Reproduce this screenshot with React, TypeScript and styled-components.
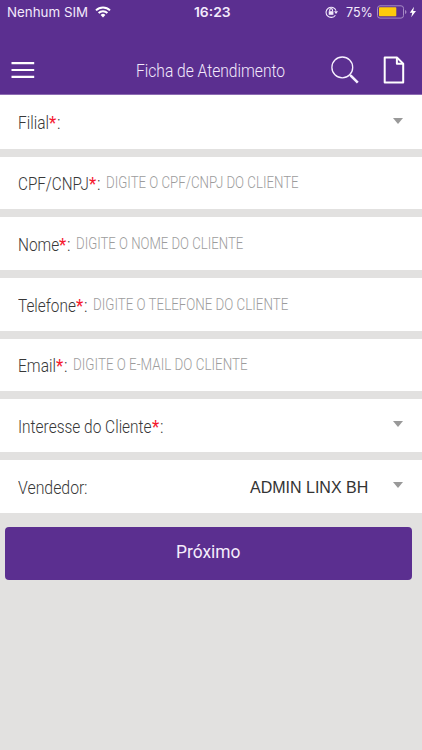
import React, { useLayoutEffect, useRef, useState } from "react";
import styled, { createGlobalStyle } from "styled-components";

const PURPLE = "#5b2f90";

const GlobalStyle = createGlobalStyle`
  * { box-sizing: border-box; }
  body { margin: 0; background: #e2e1e0; font-family: Roboto, "Liberation Sans", sans-serif; }
`;

const Screen = styled.main`
  width: 422px;
  height: 750px;
  overflow: hidden;
  background: #e2e1e0;
`;

const FitBox = styled.span<{ $width: number }>`
  display: block;
  flex: none;
  width: ${(p) => p.$width}px;
  white-space: nowrap;
`;
const FitInner = styled.span`
  display: inline-block;
  transform-origin: 0 50%;
`;

/* Condenses a run of text so that it fills the given width. */
function Fit({ width, children }: { width: number; children: React.ReactNode }) {
  const ref = useRef<HTMLSpanElement>(null);
  const [scale, setScale] = useState(1);
  useLayoutEffect(() => {
    if (ref.current) setScale(width / ref.current.offsetWidth);
  }, [width]);
  return (
    <FitBox $width={width}>
      <FitInner ref={ref} style={{ transform: `scaleX(${scale})` }}>{children}</FitInner>
    </FitBox>
  );
}

const Header = styled.header`
  height: 95px;
  background: ${PURPLE};
  border-bottom: 1px solid #8d6cb2;
  color: #f3eafc;
`;
const StatusBar = styled.div`
  height: 24px;
  display: grid;
  grid-template-columns: 1fr auto 1fr;
  align-items: center;
  padding: 0 5px 0 7px;
  font: 400 13px/24px Inter, sans-serif;
`;
const StatusGroup = styled.div<{ $end?: boolean }>`
  display: flex;
  align-items: center;
  justify-content: ${(p) => (p.$end ? "flex-end" : "flex-start")};
`;
const Clock = styled.div`
  font-weight: 600;
  font-size: 13.5px;
`;
const Icon = styled.svg<{ $left?: number }>`
  display: block;
  flex: none;
  margin-left: ${(p) => p.$left ?? 0}px;
`;
const NavBar = styled.nav`
  height: 70px;
  display: flex;
  align-items: center;
  padding: 22px 17px 0 11px;
`;
const Title = styled.h1`
  flex: 1;
  margin: 2px 0 0 101px;
  font-size: 18px;
  line-height: 24px;
  font-weight: 300;
`;

const Form = styled.form`
  display: grid;
  grid-template-rows: 54px 52px 53px 53px 52px 53px 53px;
  row-gap: 8px;
`;
const Row = styled.div`
  display: flex;
  align-items: center;
  padding: 2px 19px 0 18px;
  background: #fff;
  font-size: 18px;
  line-height: 24px;
  font-weight: 300;
  color: #383838;
`;
const Star = styled.span`
  color: #f5192f;
  font-weight: 400;
`;
const Placeholder = styled.span`
  margin-left: 6px;
  font-size: 16px;
  line-height: 20px;
  padding-bottom: 2px;
  color: #9c9c9c;
`;
const Value = styled.span`
  margin-left: auto;
  margin-right: 25px;
  font: 400 16px/24px "Liberation Sans", sans-serif;
  color: #333;
`;
const Caret = styled.span<{ $auto?: boolean }>`
  margin: -5px 0 0 ${(p) => (p.$auto ? "auto" : "0")};
  border: 5.5px solid transparent;
  border-top: 6px solid #999;
  border-bottom: 0;
`;
const NextButton = styled.button`
  display: flex;
  justify-content: center;
  align-items: center;
  width: 407px;
  height: 53px;
  margin: 14px 0 0 5px;
  padding: 0 2px 4px 0;
  border: 0;
  border-radius: 4px;
  background: ${PURPLE};
  color: #f5edfc;
  font: 400 19px/24px Roboto, sans-serif;
`;

type Field = {
  label: string;
  labelWidth: number;
  required?: boolean;
  placeholder?: string;
  placeholderWidth?: number;
  value?: string;
  select?: boolean;
};

const fields: Field[] = [
  { label: "Filial", labelWidth: 31, required: true, select: true },
  { label: "CPF/CNPJ", labelWidth: 71, required: true, placeholder: "DIGITE O CPF/CNPJ DO CLIENTE", placeholderWidth: 193 },
  { label: "Nome", labelWidth: 41, required: true, placeholder: "DIGITE O NOME DO CLIENTE", placeholderWidth: 167 },
  { label: "Telefone", labelWidth: 58, required: true, placeholder: "DIGITE O TELEFONE DO CLIENTE", placeholderWidth: 195 },
  { label: "Email", labelWidth: 38, required: true, placeholder: "DIGITE O E-MAIL DO CLIENTE", placeholderWidth: 175 },
  { label: "Interesse do Cliente", labelWidth: 134, required: true, select: true },
  { label: "Vendedor", labelWidth: 66, value: "ADMIN LINX BH", select: true },
];

function FieldRow({ field }: { field: Field }) {
  return (
    <Row>
      <Fit width={field.labelWidth}>{field.label}</Fit>
      {field.required && <Star><Fit width={7.5}>*</Fit></Star>}
      <Fit width={3.7}>:</Fit>
      {field.placeholder && (
        <Placeholder><Fit width={field.placeholderWidth!}>{field.placeholder}</Fit></Placeholder>
      )}
      {field.value && <Value><Fit width={118}>{field.value}</Fit></Value>}
      {field.select && <Caret $auto={!field.value} />}
    </Row>
  );
}

export default function App() {
  return (
    <>
      <GlobalStyle />
      <Screen>
        <Header>
          <StatusBar>
            <StatusGroup>
              <Fit width={81}>Nenhum SIM</Fit>
              <Icon $left={7} width="16" height="12" viewBox="0 0 16 12" fill="none" stroke="#fff" strokeWidth="2">
                <path d="M1 4.4a10 10 0 0 1 14 0M3.6 7a6.3 6.3 0 0 1 8.8 0" />
                <path d="M5.6 9a3.5 3.5 0 0 1 4.8 0L8 11.5z" fill="#fff" stroke="none" />
              </Icon>
            </StatusGroup>
            <Clock><Fit width={37}>16:23</Fit></Clock>
            <StatusGroup $end>
              <Icon width="14" height="12" viewBox="0 0 14 12" fill="none" stroke="#f3eafc" strokeWidth="1.1">
                <path d="M10.4 9.2A5.1 5.1 0 1 1 11 4.6" />
                <path d="M9 5.2h4L11 8z" fill="#f3eafc" stroke="none" />
                <rect x="3.7" y="5.2" width="4.7" height="3.6" fill="#f3eafc" stroke="none" />
                <path d="M4.7 5.2V4a1.4 1.4 0 0 1 2.8 0v1.2" />
              </Icon>
              <StatusGroup><Icon width="7" height="1" /><Fit width={27}>75%</Fit></StatusGroup>
              <Icon $left={4} width="30" height="14" viewBox="0 0 30 14" fill="none">
                <rect x=".5" y=".8" width="26" height="12.3" rx="2.5" stroke="#a68bc5" />
                <rect x="2" y="2.3" width="17.3" height="9" rx=".7" fill="#ffcb0b" />
                <path d="M28 5v4c2-.7 2-3.3 0-4" fill="#a68bc5" />
              </Icon>
              <Icon $left={2} width="8" height="12" viewBox="0 0 8 12" fill="#fff">
                <path d="M5 .8.8 6.7h2.5L2.2 11.2 7 5H4.2z" />
              </Icon>
            </StatusGroup>
          </StatusBar>
          <NavBar>
            <Icon width="24" height="18" viewBox="0 0 24 18" stroke="#fff" strokeWidth="2.2">
              <path d="M.5 2.2h22.7M.5 9h22.7M.5 15.8h22.7" />
            </Icon>
            <Title><Fit width={149}>Ficha de Atendimento</Fit></Title>
            <Icon width="28" height="28" viewBox="0 0 28 28" fill="none" stroke="#f7f0ff">
              <circle cx="11.3" cy="11.4" r="10.4" strokeWidth="1.3" />
              <path d="m18.5 18.4 2 2" strokeWidth="1.3" />
              <path d="m19.5 19.4 7.3 7.3" strokeWidth="2.6" />
            </Icon>
            <Icon $left={24} width="22" height="28" viewBox="0 0 22 28" fill="none" stroke="#fff" strokeWidth="2" strokeLinejoin="round">
              <path d="M1.7 1.4h12.2l6.3 6.4v18.7H1.7z" />
              <path d="M13.9 1.4v6.4h6.3" />
            </Icon>
          </NavBar>
        </Header>
        <Form>
          {fields.map((f) => <FieldRow key={f.label} field={f} />)}
        </Form>
        <NextButton type="button"><Fit width={64}>Próximo</Fit></NextButton>
      </Screen>
    </>
  );
}
